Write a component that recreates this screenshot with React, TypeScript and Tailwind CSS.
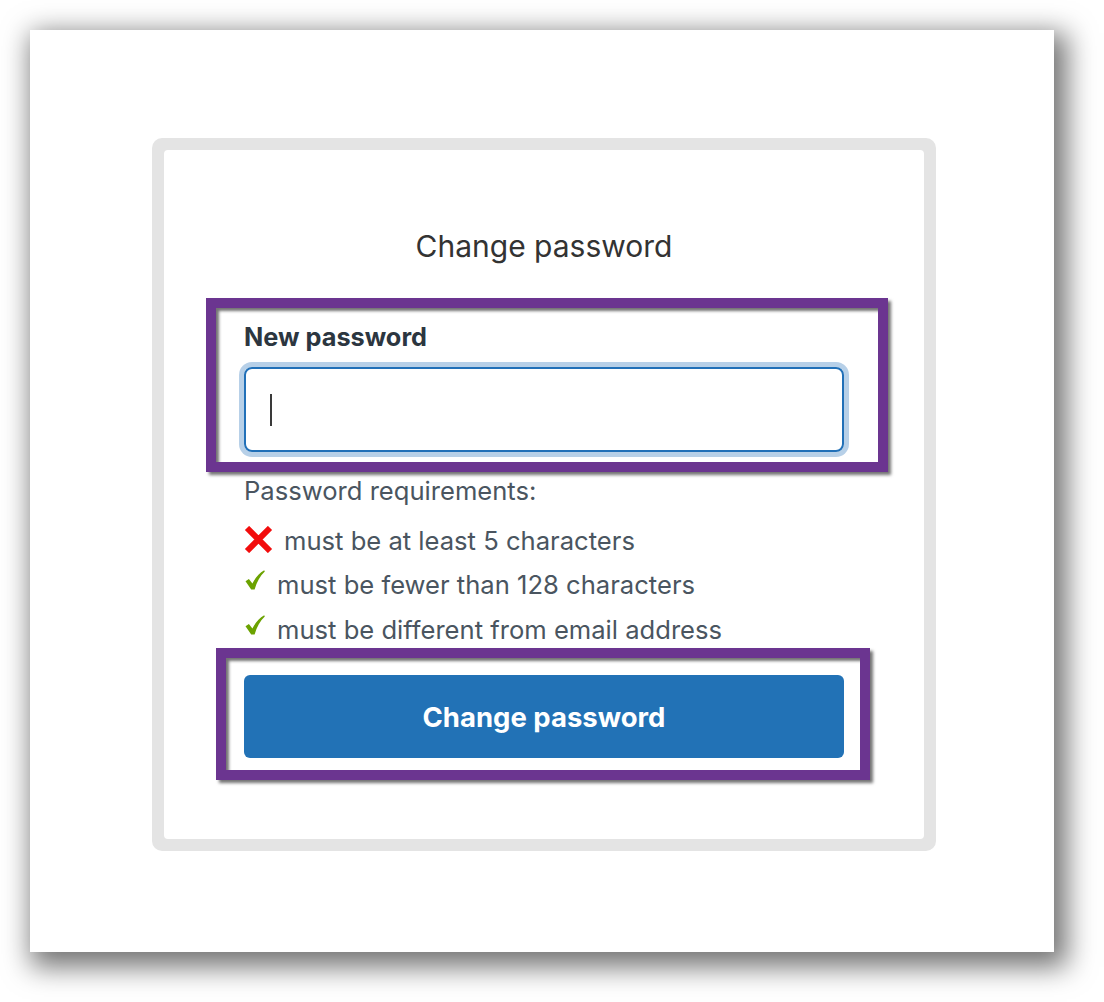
import React from "react";

function CrossIcon() {
  return (
    <svg width="29" height="27" viewBox="0 0 29 27" className="shrink-0">
      <path d="M3 2 L26 25 M26 2 L3 25" stroke="#f20d0d" strokeWidth="6" strokeLinecap="butt" />
    </svg>
  );
}

function CheckIcon() {
  return (
    <svg width="20" height="20" viewBox="0 0 20 20" className="shrink-0">
      <path
        d="M0.5 11.2 L3.9 8.9 L7.4 13.6 C10.2 7.8 14 3.4 19.2 0.2 L19.8 1.4 C15.2 5.6 11.8 11.6 9.6 19.6 L6.2 19.6 Z"
        fill="#6ba200"
      />
    </svg>
  );
}

export default function App() {
  const body = { fontFamily: "Inter, 'Noto Sans', sans-serif" };
  return (
    <div className="w-[1104px] h-[1002px] bg-white pl-[30px] pt-[30px]" style={body}>
      <div className="w-[1024px] h-[922px] bg-white shadow-[7px_9px_26px_6px_rgba(0,0,0,0.55)] pl-[122px] pt-[108px]">
        <div className="w-[784px] h-[713px] bg-[#e4e4e4] rounded-[10px] p-[12px]">
          <div className="relative w-full h-full bg-white rounded-[4px] px-[80px] pt-[78px]">
            <h1 className="text-center text-[30px] leading-[36px] text-[#333333] font-normal">Change password</h1>

            <div className="mt-[59px] text-[25.3px] leading-[28px] font-bold text-[#2c3640]">New password</div>

            <div className="mt-[16px] h-[85px] rounded-[8px] border-2 border-[#2170b8] shadow-[0_0_0_5px_#b7d0e8] flex items-center pl-[24px]">
              <div className="w-[2px] h-[32px] bg-[#3a3a3a]" />
            </div>

            <div className="mt-[25px] text-[25.6px] leading-[28px] text-[#4a5560]">Password requirements:</div>

            <div className="mt-[22px] flex items-center gap-[11px] text-[25.6px] leading-[28px] text-[#4a5560]">
              <span className="flex -mt-[3px]"><CrossIcon /></span>
              <span>must be at least 5 characters</span>
            </div>
            <div className="mt-[16px] flex items-start gap-[12px] text-[25.6px] leading-[28px] text-[#4a5560]">
              <span className="flex pl-[1px] -mt-[1px]"><CheckIcon /></span>
              <span>must be fewer than 128 characters</span>
            </div>
            <div className="mt-[17px] flex items-start gap-[12px] text-[25.6px] leading-[28px] text-[#4a5560]">
              <span className="flex pl-[1px] -mt-[1px]"><CheckIcon /></span>
              <span>must be different from email address</span>
            </div>

            <button className="mt-[31px] w-full h-[83px] rounded-[6px] bg-[#2272b6] text-white text-[27.5px] font-bold pt-[3px]">
              Change password
            </button>

            <div className="absolute left-[42px] top-[148px] w-[682px] h-[174px] border-[10px] border-[#6b3590] shadow-[3px_3px_3px_rgba(0,0,0,0.55),inset_3px_3px_3px_rgba(0,0,0,0.55)] pointer-events-none" />
            <div className="absolute left-[52px] top-[498px] w-[654px] h-[132px] border-[10px] border-[#6b3590] shadow-[3px_3px_3px_rgba(0,0,0,0.55),inset_3px_3px_3px_rgba(0,0,0,0.55)] pointer-events-none" />
          </div>
        </div>
      </div>
    </div>
  );
}
